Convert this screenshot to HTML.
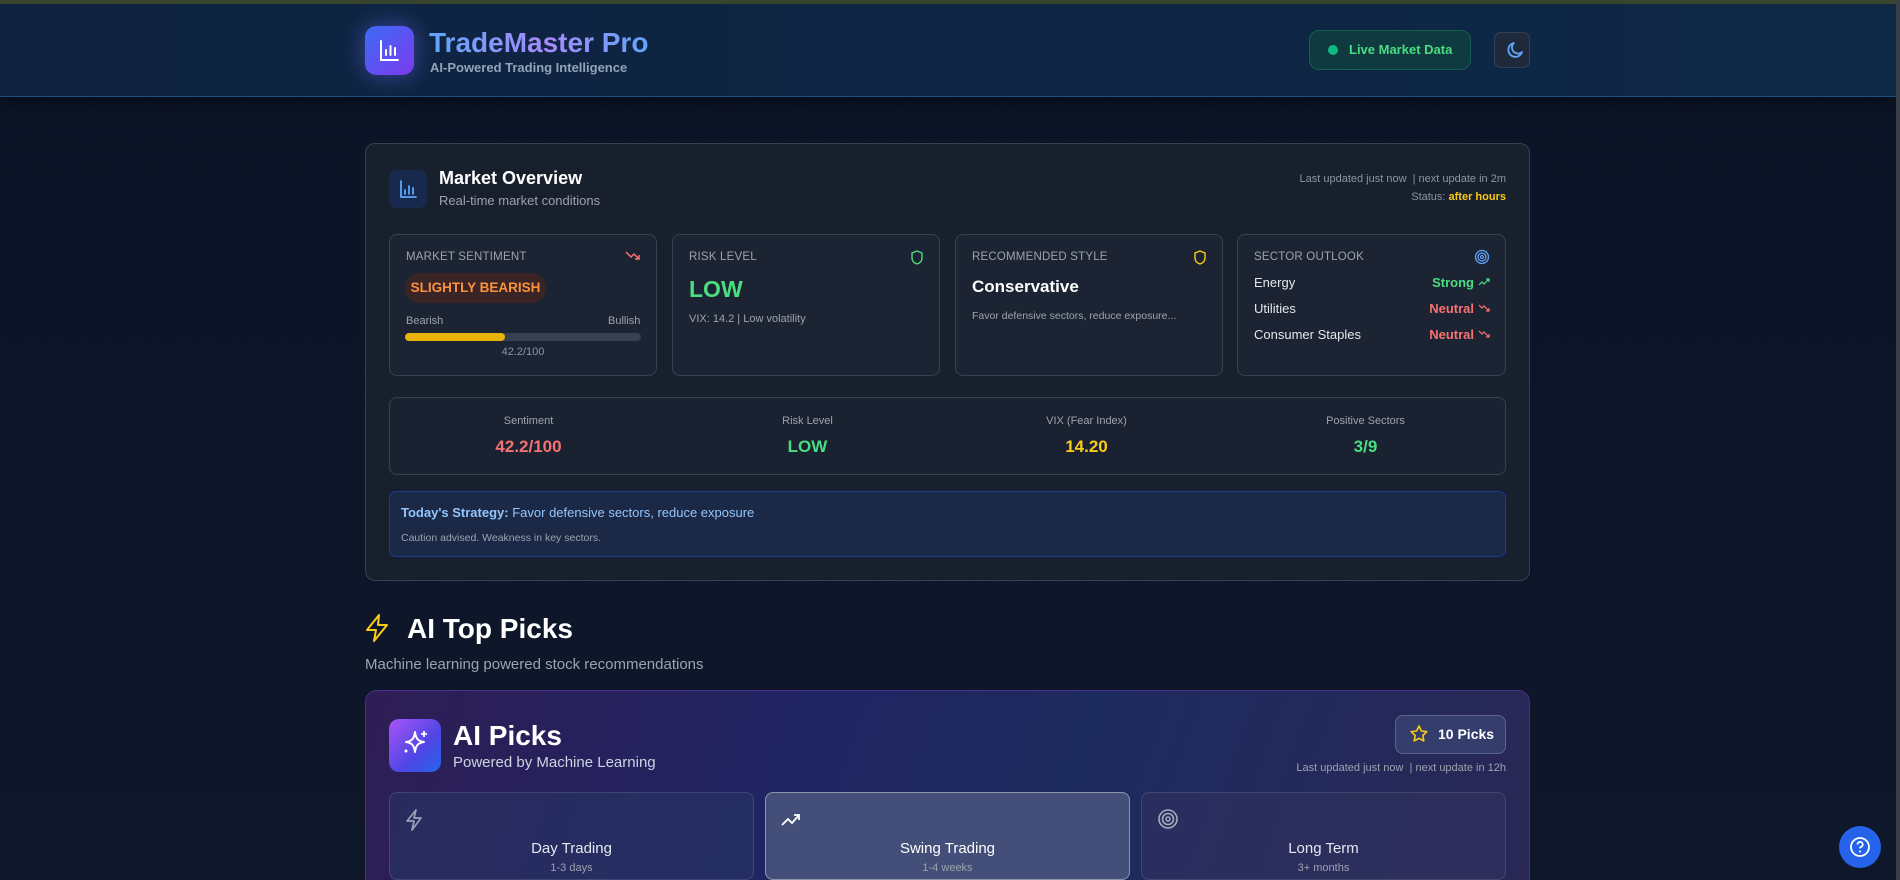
<!DOCTYPE html>
<html><head><meta charset="utf-8"><style>
*{margin:0;padding:0;box-sizing:border-box}
html{width:1900px;height:880px;overflow:hidden}
body{width:1900px;height:880px;overflow:hidden;font-family:"Liberation Sans",sans-serif;background:linear-gradient(180deg,#0b1426 0%,#0d1629 60%,#0f172a 100%);position:relative;color:#fff}
.a{position:absolute}
.topbar{left:0;top:0;width:1900px;height:4px;background:#3c4a30}
.header{left:0;top:4px;width:1896px;height:93px;background:linear-gradient(90deg,#0f2340,#0e2644 60%,#0f2846);border-bottom:1px solid #1d4f7e;box-shadow:0 6px 16px rgba(0,0,0,.4)}
.logo{left:365px;top:26px;width:49px;height:49px;border-radius:11px;background:linear-gradient(135deg,#3b6cf6,#7c3aed);box-shadow:0 0 24px rgba(99,102,241,.55)}
.title{left:429px;top:26px;font-size:28px;font-weight:bold;background:linear-gradient(90deg,#60a5fa,#a78bfa 55%,#60a5fa);-webkit-background-clip:text;background-clip:text;color:transparent;line-height:34px}
.sub{left:430px;top:60px;font-size:13px;font-weight:bold;color:#94a3b8}
.live{left:1309px;top:30px;width:162px;height:40px;border-radius:10px;background:#0f3a3f;border:1px solid #155e52;font-size:13px;font-weight:bold;color:#4ade80;line-height:38px;padding-left:39px}
.live:before{content:"";position:absolute;left:18px;top:14px;width:10px;height:10px;border-radius:50%;background:#10b981}
.moon{left:1494px;top:32px;width:36px;height:36px;border-radius:7px;background:#1e293b;border:1px solid #334155}
.card{left:365px;top:143px;width:1165px;height:438px;border-radius:10px;background:#181f2d;border:1px solid #374151}
.ic{border-radius:8px}
.box{border-radius:8px;background:#1c2433;border:1px solid #364152}
.lbl{font-size:11.5px;color:#9ca3af;letter-spacing:.2px}
.g{color:#4ade80}.r{color:#f87171}.y{color:#facc15}
.c{text-align:center}
.tab{top:792px;width:365px;height:100px;border-radius:8px;border:1px solid rgba(148,163,184,.22);background:rgba(40,55,100,.55)}
</style></head><body>
<div class="a topbar"></div>
<div class="a header"></div>
<div class="a logo"><svg width="49" height="49" viewBox="0 0 49 49"><path d="M16 15v19h17M21 29v-5M25.5 29v-9M30 29v-7" stroke="#fff" stroke-width="2" fill="none" stroke-linecap="round"/></svg></div>
<div class="a title">TradeMaster Pro</div>
<div class="a sub">AI-Powered Trading Intelligence</div>
<div class="a live">Live Market Data</div>
<div class="a moon"><svg width="36" height="36" viewBox="0 0 36 36"><path d="M19 10a7 7 0 1 0 8 9 6 6 0 0 1-8-9z" stroke="#60a5fa" stroke-width="1.8" fill="none" stroke-linejoin="round"/></svg></div>

<div class="a card"></div>
<div class="a ic" style="left:389px;top:170px;width:38px;height:38px;background:#172a4d"><svg width="38" height="38"><path d="M12 11v16h15M16 24v-4M20 24v-8M24 24v-6" stroke="#60a5fa" stroke-width="1.8" fill="none" stroke-linecap="round"/></svg></div>
<div class="a" style="left:439px;top:168px;font-size:18px;font-weight:bold">Market Overview</div>
<div class="a" style="left:439px;top:193px;font-size:13px;color:#9ca3af">Real-time market conditions</div>
<div class="a" style="right:394px;top:173px;font-size:11px;color:#8b95a5">Last updated just now &nbsp;| next update in 2m</div>
<div class="a" style="right:394px;top:191px;font-size:11px;color:#8b95a5">Status: <b class="y">after hours</b></div>

<div class="a box" style="left:389px;top:234px;width:268px;height:142px"></div>
<div class="a lbl" style="left:406px;top:251px">MARKET SENTIMENT</div>
<svg class="a" style="left:625px;top:250px" width="16" height="12"><path d="M1 2l5 5 3-3 5 5M14 5v4h-4" stroke="#f87171" stroke-width="1.5" fill="none"/></svg>
<div class="a" style="left:405px;top:273px;width:141px;height:30px;border-radius:15px;background:#3a2426;color:#fb923c;font-weight:bold;font-size:13.5px;line-height:30px;text-align:center">SLIGHTLY BEARISH</div>
<div class="a" style="left:406px;top:315px;font-size:11px;color:#9ca3af">Bearish</div>
<div class="a" style="left:608px;top:315px;font-size:11px;color:#9ca3af">Bullish</div>
<div class="a" style="left:405px;top:333px;width:236px;height:8px;border-radius:4px;background:#374151"><div style="width:100px;height:8px;border-radius:4px;background:#eab308"></div></div>
<div class="a c" style="left:405px;top:346px;width:236px;font-size:11px;color:#8b95a5">42.2/100</div>

<div class="a box" style="left:672px;top:234px;width:268px;height:142px"></div>
<div class="a lbl" style="left:689px;top:251px">RISK LEVEL</div>
<svg class="a" style="left:910px;top:250px" width="14" height="15"><path d="M7 1l5 2v5c0 3-2 5-5 6-3-1-5-3-5-6V3z" stroke="#4ade80" stroke-width="1.4" fill="none"/></svg>
<div class="a g" style="left:689px;top:276px;font-size:23px;font-weight:bold">LOW</div>
<div class="a" style="left:689px;top:313px;font-size:11px;color:#9ca3af">VIX: 14.2 | Low volatility</div>

<div class="a box" style="left:955px;top:234px;width:268px;height:142px"></div>
<div class="a lbl" style="left:972px;top:251px">RECOMMENDED STYLE</div>
<svg class="a" style="left:1193px;top:250px" width="14" height="15"><path d="M7 1l5 2v5c0 3-2 5-5 6-3-1-5-3-5-6V3z" stroke="#facc15" stroke-width="1.4" fill="none"/></svg>
<div class="a" style="left:972px;top:277px;font-size:17px;font-weight:bold">Conservative</div>
<div class="a" style="left:972px;top:310px;font-size:10.5px;color:#9ca3af">Favor defensive sectors, reduce exposure...</div>

<div class="a box" style="left:1237px;top:234px;width:269px;height:142px"></div>
<div class="a lbl" style="left:1254px;top:251px">SECTOR OUTLOOK</div>
<svg class="a" style="left:1474px;top:249px" width="16" height="16"><circle cx="8" cy="8" r="6.5" stroke="#60a5fa" stroke-width="1.3" fill="none"/><circle cx="8" cy="8" r="4" stroke="#60a5fa" stroke-width="1.3" fill="none"/><circle cx="8" cy="8" r="1.5" stroke="#60a5fa" stroke-width="1.2" fill="none"/></svg>
<div class="a" style="left:1254px;top:275px;font-size:13px;color:#e5e7eb">Energy</div>
<div class="a" style="left:1254px;top:301px;font-size:13px;color:#e5e7eb">Utilities</div>
<div class="a" style="left:1254px;top:327px;font-size:13px;color:#e5e7eb">Consumer Staples</div>
<div class="a g" style="right:426px;top:275px;font-size:13px;font-weight:bold">Strong</div>
<div class="a r" style="right:426px;top:301px;font-size:13px;font-weight:bold">Neutral</div>
<div class="a r" style="right:426px;top:327px;font-size:13px;font-weight:bold">Neutral</div>
<svg class="a" style="left:1478px;top:277px" width="12" height="10"><path d="M1 8l3-3 2 2 5-5M8 2h3v3" stroke="#4ade80" stroke-width="1.2" fill="none"/></svg>
<svg class="a" style="left:1478px;top:303px" width="12" height="10"><path d="M1 2l3 3 2-2 5 5M8 8h3V5" stroke="#f87171" stroke-width="1.2" fill="none"/></svg>
<svg class="a" style="left:1478px;top:329px" width="12" height="10"><path d="M1 2l3 3 2-2 5 5M8 8h3V5" stroke="#f87171" stroke-width="1.2" fill="none"/></svg>

<div class="a box" style="left:389px;top:397px;width:1117px;height:78px;background:#1a2231"></div>
<div class="a c" style="left:389px;top:415px;width:279px;font-size:11px;color:#9ca3af">Sentiment</div>
<div class="a c" style="left:668px;top:415px;width:279px;font-size:11px;color:#9ca3af">Risk Level</div>
<div class="a c" style="left:947px;top:415px;width:279px;font-size:11px;color:#9ca3af">VIX (Fear Index)</div>
<div class="a c" style="left:1226px;top:415px;width:279px;font-size:11px;color:#9ca3af">Positive Sectors</div>
<div class="a c r" style="left:389px;top:437px;width:279px;font-size:17px;font-weight:bold">42.2/100</div>
<div class="a c g" style="left:668px;top:437px;width:279px;font-size:17px;font-weight:bold">LOW</div>
<div class="a c y" style="left:947px;top:437px;width:279px;font-size:17px;font-weight:bold">14.20</div>
<div class="a c g" style="left:1226px;top:437px;width:279px;font-size:17px;font-weight:bold">3/9</div>

<div class="a" style="left:389px;top:491px;width:1117px;height:66px;border-radius:7px;background:#1b2946;border:1px solid #1e3a8a"></div>
<div class="a" style="left:401px;top:505px;font-size:13px;color:#93c5fd"><b>Today's Strategy:</b> Favor defensive sectors, reduce exposure</div>
<div class="a" style="left:401px;top:532px;font-size:10.5px;color:#9ca3af">Caution advised. Weakness in key sectors.</div>

<svg class="a" style="left:364px;top:613px" width="26" height="30"><path d="M15 2L3 17h9l-2 11 13-16h-9z" stroke="#facc15" stroke-width="2" fill="none" stroke-linejoin="round"/></svg>
<div class="a" style="left:407px;top:613px;font-size:28px;font-weight:bold">AI Top Picks</div>
<div class="a" style="left:365px;top:656px;font-size:15px;color:#9ca3af">Machine learning powered stock recommendations</div>

<div class="a" style="left:365px;top:690px;width:1165px;height:200px;border-radius:12px;border:1px solid #4c2f8a;background:linear-gradient(110deg,#2e1d55 0%,#212462 35%,#1d2a5e 60%,#292856 100%)"></div>
<div class="a" style="left:389px;top:719px;width:52px;height:53px;border-radius:10px;background:linear-gradient(135deg,#a855f7,#4f46e5 60%,#2563eb)"><svg width="52" height="53"><path d="M26 13c1 7 3 9 9 10-6 1-8 3-9 10-1-7-3-9-9-10 6-1 8-3 9-10z" stroke="#fff" stroke-width="2" fill="none" stroke-linejoin="round"/><path d="M35 12v6M32 15h6" stroke="#fff" stroke-width="1.8"/><circle cx="17" cy="32" r="1.5" fill="#fff"/></svg></div>
<div class="a" style="left:453px;top:720px;font-size:28px;font-weight:bold">AI Picks</div>
<div class="a" style="left:453px;top:754px;font-size:15px;color:#cbd5e1">Powered by Machine Learning</div>
<div class="a" style="left:1395px;top:715px;width:111px;height:39px;border-radius:8px;background:#343d6c;border:1px solid #5a6390;font-size:14px;font-weight:bold;line-height:37px;padding-left:42px">10 Picks</div>
<svg class="a" style="left:1409px;top:724px" width="20" height="20"><path d="M10 2l2.4 5 5.4.7-4 3.8 1 5.4L10 14.3 5.2 16.9l1-5.4-4-3.8L7.6 7z" stroke="#facc15" stroke-width="1.6" fill="none" stroke-linejoin="round"/></svg>
<div class="a" style="right:394px;top:762px;font-size:11px;color:#9ca3af">Last updated just now &nbsp;| next update in 12h</div>

<div class="a tab" style="left:389px;height:88px"></div>
<div class="a tab" style="left:765px;height:88px;background:#434f78;border-color:#8b93ad"></div>
<div class="a tab" style="left:1141px;height:88px;background:rgba(50,50,95,.6)"></div>
<svg class="a" style="left:403px;top:808px" width="22" height="24"><path d="M13 2L4 13h7l-2 9 9-12h-7z" stroke="#94a3b8" stroke-width="1.7" fill="none" stroke-linejoin="round"/></svg>
<svg class="a" style="left:780px;top:812px" width="22" height="16"><path d="M2 13l6-6 4 4 7-8M14 3h5v5" stroke="#fff" stroke-width="1.8" fill="none"/></svg>
<svg class="a" style="left:1157px;top:808px" width="22" height="22"><circle cx="11" cy="11" r="9" stroke="#a3acbd" stroke-width="1.6" fill="none"/><circle cx="11" cy="11" r="5.5" stroke="#a3acbd" stroke-width="1.6" fill="none"/><circle cx="11" cy="11" r="2" stroke="#a3acbd" stroke-width="1.5" fill="none"/></svg>
<div class="a c" style="left:389px;top:840px;width:365px;font-size:15px;color:#e2e8f0">Day Trading</div>
<div class="a c" style="left:765px;top:840px;width:365px;font-size:15px;color:#fff">Swing Trading</div>
<div class="a c" style="left:1141px;top:840px;width:365px;font-size:15px;color:#e2e8f0">Long Term</div>
<div class="a c" style="left:389px;top:862px;width:365px;font-size:11px;color:#9ca3af">1-3 days</div>
<div class="a c" style="left:765px;top:862px;width:365px;font-size:11px;color:#9ca3af">1-4 weeks</div>
<div class="a c" style="left:1141px;top:862px;width:365px;font-size:11px;color:#9ca3af">3+ months</div>

<div class="a" style="left:1839px;top:826px;width:42px;height:42px;border-radius:50%;background:#2563eb"><svg width="42" height="42"><circle cx="21" cy="21" r="9" stroke="#fff" stroke-width="1.8" fill="none"/><path d="M18.5 18.5a2.6 2.6 0 1 1 3.5 2.4c-.7.3-1 .8-1 1.5" stroke="#fff" stroke-width="1.7" fill="none"/><circle cx="21" cy="25.5" r="1" fill="#fff"/></svg></div>
<div class="a" style="left:1896px;top:0;width:4px;height:880px;background:#3a3f47"></div>
</body></html>
